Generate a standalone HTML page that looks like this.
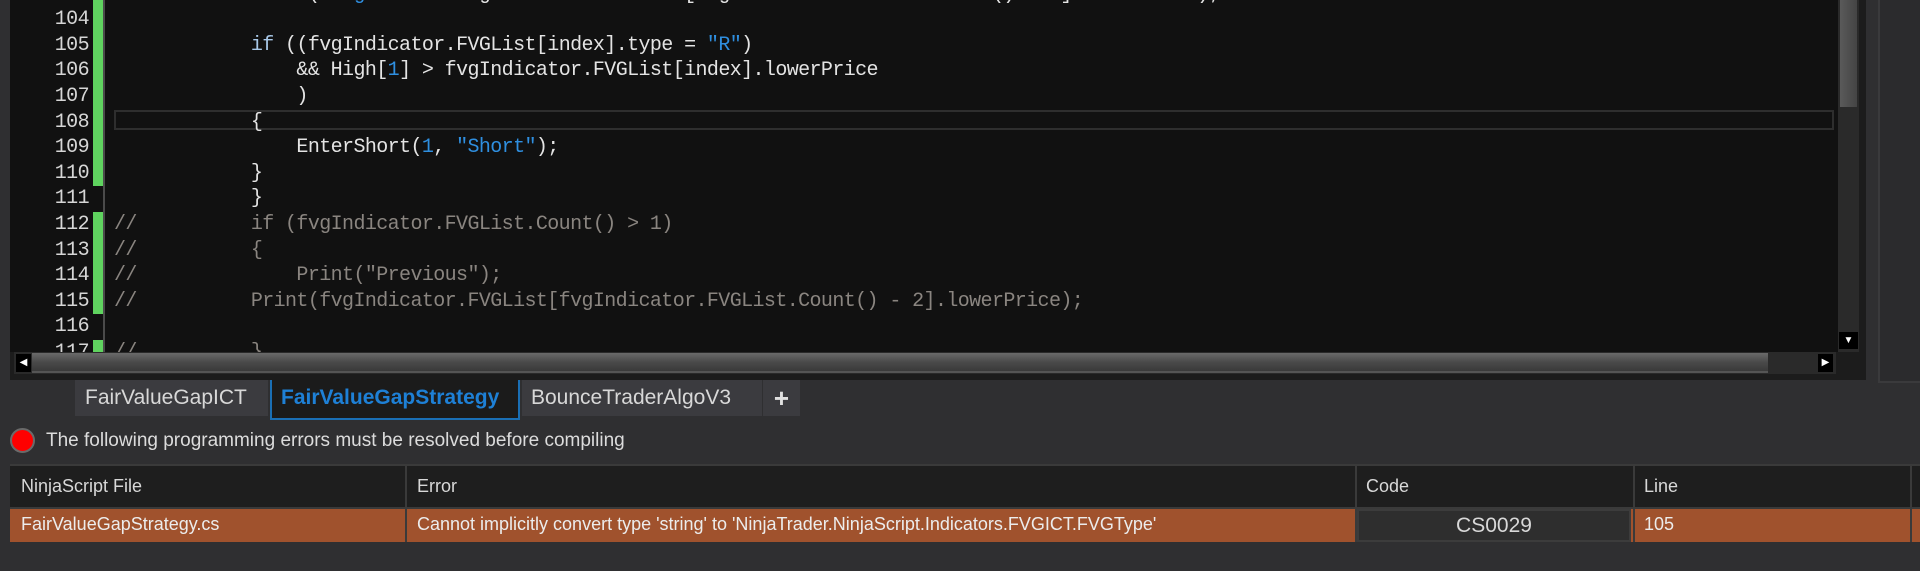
<!DOCTYPE html>
<html><head><meta charset="utf-8"><style>
*{margin:0;padding:0;box-sizing:border-box}
body{width:1920px;height:571px;background:#2f2f31;position:relative;overflow:hidden;font-family:"Liberation Sans",sans-serif}
.abs{position:absolute}
#frame{left:10px;top:0;width:1856px;height:380px;background:#1c1c1c}
#ed{left:10px;top:0;width:1828px;height:352px;background:#111;overflow:hidden}
.ln{position:absolute;left:0;width:79px;text-align:right;font:20px "Liberation Mono",monospace;letter-spacing:-0.6px;color:#d6d6d6;height:25.6px;line-height:25.6px}
.gb{position:absolute;left:83px;width:10px;height:25.6px;background:#5fd35f}
.cl{position:absolute;left:104px;white-space:pre;font:20px "Liberation Mono",monospace;letter-spacing:-0.6px;color:#e4e4e4;height:25.6px;line-height:25.6px}
.b{color:#2f8fe0}.k{color:#a8c8e8}.c{color:#8a8580}
</style></head><body>
<div class="abs" id="frame"></div>
<div class="abs" id="ed">
  <div class="abs" style="left:93px;top:0;width:2px;height:352px;background:#4a4a4a"></div>
  <div class="abs" style="left:104px;top:110px;width:1720px;height:20px;border:2px solid #2e2e2e"></div>
  <div class="cl" style="top:-18.4px">            Print(<span class="b">"Signal "</span> + fvgIndicator.FVGList[fvgIndicator.FVGList.Count() - <span class="b">1</span>].lowerPrice);</div>
  <div class="ln" style="top:7.2px">104</div><div class="gb" style="top:-20px;height:52.8px"></div>
  <div class="ln" style="top:32.8px">105</div><div class="gb" style="top:32.8px"></div>
  <div class="cl" style="top:32.8px">            <span class="k">if</span> ((fvgIndicator.FVGList[index].type = <span class="b">"R"</span>)</div>
  <div class="ln" style="top:58.4px">106</div><div class="gb" style="top:58.4px"></div>
  <div class="cl" style="top:58.4px">                &amp;&amp; High[<span class="b">1</span>] &gt; fvgIndicator.FVGList[index].lowerPrice</div>
  <div class="ln" style="top:84px">107</div><div class="gb" style="top:84px"></div>
  <div class="cl" style="top:84px">                )</div>
  <div class="ln" style="top:109.6px">108</div><div class="gb" style="top:109.6px"></div>
  <div class="cl" style="top:109.6px">            {</div>
  <div class="ln" style="top:135.2px">109</div><div class="gb" style="top:135.2px"></div>
  <div class="cl" style="top:135.2px">                EnterShort(<span class="b">1</span>, <span class="b">"Short"</span>);</div>
  <div class="ln" style="top:160.8px">110</div><div class="gb" style="top:160.8px"></div>
  <div class="cl" style="top:160.8px">            }</div>
  <div class="ln" style="top:186.4px">111</div>
  <div class="cl" style="top:186.4px">            }</div>
  <div class="ln" style="top:212px">112</div><div class="gb" style="top:212px;height:102.4px"></div>
  <div class="cl c" style="top:212px">//          if (fvgIndicator.FVGList.Count() &gt; 1)</div>
  <div class="ln" style="top:237.6px">113</div>
  <div class="cl c" style="top:237.6px">//          {</div>
  <div class="ln" style="top:263.2px">114</div>
  <div class="cl c" style="top:263.2px">//              Print("Previous");</div>
  <div class="ln" style="top:288.8px">115</div>
  <div class="cl c" style="top:288.8px">//          Print(fvgIndicator.FVGList[fvgIndicator.FVGList.Count() - 2].lowerPrice);</div>
  <div class="ln" style="top:314.4px">116</div>
  <div class="ln" style="top:340px">117</div><div class="gb" style="top:340px"></div>
  <div class="cl c" style="top:340px">//          }</div>
</div>
<div class="abs" style="left:1838px;top:0;width:21px;height:352px;background:#2a2a2a"></div>
<div class="abs" style="left:1840px;top:0;width:17px;height:107px;background:linear-gradient(90deg,#5a5a5a,#444)"></div>
<div class="abs" style="left:1839px;top:332px;width:19px;height:17px;background:#000;color:#fff;font-size:10px;text-align:center;line-height:17px">▼</div>
<div class="abs" style="left:14px;top:352px;width:1822px;height:22px;background:#2a2a2a"></div>
<div class="abs" style="left:32px;top:353px;width:1736px;height:20px;background:linear-gradient(#6a6a6a,#4a4a4a 50%,#3a3a3a);border-bottom:2px solid #555"></div>
<div class="abs" style="left:16px;top:354px;width:15px;height:18px;background:#000;color:#fff;font-size:10px;text-align:center;line-height:18px">◀</div>
<div class="abs" style="left:1818px;top:354px;width:15px;height:18px;background:#000;color:#fff;font-size:10px;text-align:center;line-height:18px">▶</div>
<div class="abs" style="left:1878px;top:0;width:42px;height:383px;background:#2b2b2d;border-left:2px solid #3a3a3c;border-bottom:2px solid #3a3a3c"></div>
<div class="abs" style="left:75px;top:380px;width:193px;height:36px;background:#3b3b3f;color:#d8d8d8;font-size:21px;line-height:36px;padding-left:10px">FairValueGapICT</div>
<div class="abs" style="left:270px;top:380px;width:250px;height:40px;background:#1b1b1b;border:2px solid #1a6fb5;border-top:none;color:#1e80d6;font-size:21px;font-weight:bold;line-height:36px;padding-left:9px">FairValueGapStrategy</div>
<div class="abs" style="left:522px;top:380px;width:240px;height:36px;background:#3b3b3f;color:#d8d8d8;font-size:21px;line-height:36px;padding-left:9px">BounceTraderAlgoV3</div>
<div class="abs" style="left:763px;top:380px;width:37px;height:36px;background:#3b3b3f;color:#e0e0e0;font-size:26px;font-weight:bold;line-height:36px;text-align:center">+</div>
<div class="abs" style="left:10px;top:428px;width:25px;height:25px;border-radius:50%;background:#f00;border:2px solid #6a6a6a"></div>
<div class="abs" style="left:46px;top:429px;color:#dcdcdc;font-size:19px;line-height:24px">The following programming errors must be resolved before compiling</div>
<div class="abs" style="left:10px;top:464px;width:1910px;height:44px;background:#1e1e1e;border-top:2px solid #3a3a3a"></div>
<div class="abs" style="left:10px;top:507px;width:1910px;height:2px;background:#3a3a3a"></div>
<div class="abs" style="left:10px;top:509px;width:1910px;height:33px;background:#a0522d"></div>
<div class="abs" style="left:10px;top:542px;width:1910px;height:29px;background:#2f2f31"></div>
<div class="abs" style="left:405px;top:464px;width:2px;height:78px;background:#3a3a3a"></div>
<div class="abs" style="left:1355px;top:464px;width:2px;height:78px;background:#3a3a3a"></div>
<div class="abs" style="left:1633px;top:464px;width:2px;height:78px;background:#3a3a3a"></div>
<div class="abs" style="left:1910px;top:464px;width:2px;height:78px;background:#3a3a3a"></div>
<div class="abs" style="left:21px;top:476px;color:#d8d8d8;font-size:18px">NinjaScript File</div>
<div class="abs" style="left:417px;top:476px;color:#d8d8d8;font-size:18px">Error</div>
<div class="abs" style="left:1366px;top:476px;color:#d8d8d8;font-size:18px">Code</div>
<div class="abs" style="left:1644px;top:476px;color:#d8d8d8;font-size:18px">Line</div>
<div class="abs" style="left:21px;top:514px;color:#ececec;font-size:18px">FairValueGapStrategy.cs</div>
<div class="abs" style="left:417px;top:514px;color:#ececec;font-size:18px">Cannot implicitly convert type 'string' to 'NinjaTrader.NinjaScript.Indicators.FVGICT.FVGType'</div>
<div class="abs" style="left:1357px;top:509px;width:274px;height:33px;background:#2e2e2e;border:2px solid #3c3c3c;color:#d8d8d8;font-size:21px;text-align:center;line-height:29px">CS0029</div>
<div class="abs" style="left:1644px;top:514px;color:#ececec;font-size:18px">105</div>
</body></html>
